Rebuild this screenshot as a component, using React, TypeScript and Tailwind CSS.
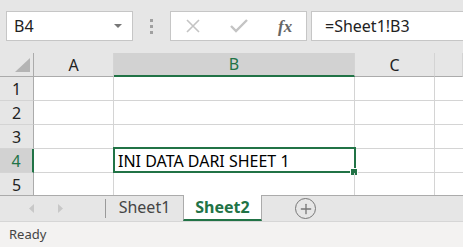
import { Plus } from "lucide-react";

const font = { fontFamily: '"Noto Sans", "Open Sans", sans-serif' };

const rows = [1, 2, 3, 4, 5];

function HeaderCell({ label, width, active }: { label: string; width: string; active?: boolean }) {
  return (
    <div
      className={`${width} shrink-0 flex items-center justify-center border-r border-[#d4d4d4] text-[16px] ${
        active ? "bg-[#d2d2d2] text-[#217346] border-b-2 border-b-[#217346]" : "bg-[#e6e6e6] text-[#222] border-b border-b-[#ababab]"
      }`}
    >
      {label}
    </div>
  );
}

export default function App() {
  return (
    <div className="w-[463px] h-[247px] overflow-hidden bg-white flex flex-col" style={font}>
      {/* formula bar */}
      <div className="h-[53px] shrink-0 bg-[#e6e6e6] flex items-start pt-[11px] pl-[6px]">
        <div className="w-[127px] h-[30px] bg-white border border-[#c6c6c6] flex items-center justify-between pl-[7px] pr-[10px] text-[16px] text-[#222]">
          <span>B4</span>
          <svg width="8" height="5" viewBox="0 0 8 5">
            <path d="M0 0 L8 0 L4 4 Z" fill="#777" />
          </svg>
        </div>
        <div className="w-[37px] h-[30px] flex flex-col items-center justify-center gap-[3px]">
          <div className="w-[3px] h-[3px] bg-[#a0a0a0]" />
          <div className="w-[3px] h-[3px] bg-[#a0a0a0]" />
          <div className="w-[3px] h-[3px] bg-[#a0a0a0]" />
        </div>
        <div className="w-[137px] h-[30px] bg-white border border-[#c6c6c6] flex items-center">
          <svg width="16" height="16" viewBox="0 0 16 16" className="ml-[14px]">
            <path d="M2 2 L14 14 M14 2 L2 14" stroke="#c4c4c4" strokeWidth="1.6" fill="none" />
          </svg>
          <svg width="18" height="14" viewBox="0 0 18 14" className="ml-[29px]">
            <path d="M1 7 L6 12 L17 1" stroke="#c4c4c4" strokeWidth="2.4" fill="none" />
          </svg>
          <span
            className="ml-[30px] text-[17px] italic font-bold text-[#666] leading-none"
            style={{ fontFamily: '"Liberation Serif", serif' }}
          >
            fx
          </span>
        </div>
        <div className="ml-[4px] flex-1 h-[30px] bg-white border border-r-0 border-[#c6c6c6] flex items-center pl-[13px] text-[16px] text-[#222]">
          =Sheet1!B3
        </div>
      </div>

      {/* grid */}
      <div className="h-[142px] shrink-0 flex flex-col overflow-hidden">
        <div className="h-[24px] shrink-0 flex">
          <div className="w-[34px] shrink-0 bg-[#e6e6e6] border-r border-b border-[#ababab] relative">
            <svg width="16" height="15" viewBox="0 0 16 15" className="absolute left-[15px] top-[5px]">
              <path d="M15 0 L15 14 L0 14 Z" fill="#b4b4b4" />
            </svg>
          </div>
          <HeaderCell label="A" width="w-[80px]" />
          <HeaderCell label="B" width="w-[241px]" active />
          <HeaderCell label="C" width="w-[80px]" />
          <HeaderCell label="" width="flex-1" />
        </div>
        {rows.map((r) => (
          <div key={r} className="h-[24px] shrink-0 flex">
            <div
              className={`w-[34px] shrink-0 flex items-center justify-center border-b border-[#d4d4d4] text-[16px] ${
                r === 4
                  ? "bg-[#d2d2d2] text-[#217346] border-r-2 border-r-[#217346]"
                  : "bg-[#e6e6e6] text-[#222] border-r border-r-[#ababab]"
              }`}
            >
              {r}
            </div>
            <div className="w-[80px] shrink-0 border-r border-b border-[#d4d4d4]" />
            <div className="w-[241px] shrink-0 border-r border-b border-[#d4d4d4] relative">
              {r === 4 && (
                <>
                  <div className="absolute -left-[1px] -top-[2px] w-[243px] h-[26px] border-2 border-[#217346]" />
                  <div className="absolute left-[236px] top-[19px] w-[8px] h-[8px] bg-white flex items-center justify-center">
                    <div className="w-[6px] h-[6px] bg-[#217346]" />
                  </div>
                  <div className="absolute left-[4px] top-0 h-[23px] flex items-center text-[16px] text-black whitespace-nowrap">
                    INI DATA DARI SHEET 1
                  </div>
                </>
              )}
            </div>
            <div className="w-[80px] shrink-0 border-r border-b border-[#d4d4d4]" />
            <div className="flex-1 border-b border-[#d4d4d4]" />
          </div>
        ))}
      </div>

      {/* sheet tabs */}
      <div className="h-[26px] shrink-0 bg-[#e6e6e6] border-t border-[#ababab] flex items-stretch">
        <div className="w-[105px] flex items-center pl-[29px] gap-[22px]">
          <svg width="6" height="9" viewBox="0 0 6 9">
            <path d="M5 0 L0 4.5 L5 9 Z" fill="#c8c8c8" />
          </svg>
          <svg width="6" height="9" viewBox="0 0 6 9">
            <path d="M1 0 L6 4.5 L1 9 Z" fill="#c8c8c8" />
          </svg>
        </div>
        <div className="w-px my-[3px] bg-[#9a9a9a]" />
        <div className="w-[77px] flex items-center justify-center text-[16px] text-[#444] -mt-[3px]">Sheet1</div>
        <div className="w-[79px] -mt-px bg-white border-x border-[#ababab] border-b-2 border-b-[#217346] flex items-center justify-center text-[16px] font-bold text-[#217346]">
          Sheet2
        </div>
        <div className="ml-[33px] flex items-center">
          <div className="w-[21px] h-[21px] rounded-full border-[1.5px] border-[#777] flex items-center justify-center">
            <Plus size={16} strokeWidth={2} color="#777" />
          </div>
        </div>
      </div>

      {/* status bar */}
      <div className="h-[26px] shrink-0 bg-[#f3f2f1] border-t border-[#d6d6d6] flex items-center pl-[9px] text-[13px] text-[#444]">
        Ready
      </div>
    </div>
  );
}
